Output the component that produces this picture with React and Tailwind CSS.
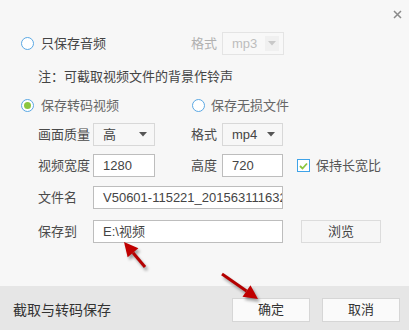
import React from 'react';

const FONT = '"Liberation Sans", "Noto Sans CJK SC", sans-serif';

function Radio({ checked }) {
  return (
    <span className="w-[13px] h-[13px] rounded-full border border-[#5aa8e4] bg-white flex items-center justify-center shrink-0">
      {checked && <span className="w-[7px] h-[7px] rounded-full bg-[#8cc63f]" />}
    </span>
  );
}

function Arrow({ disabled }) {
  return (
    <svg width="8" height="5" viewBox="0 0 8 5">
      <path d="M0 0 H8 L4 4.5 Z" fill={disabled ? '#c8c8c8' : '#555'} />
    </svg>
  );
}

function Select({ value, width, disabled }) {
  return (
    <div
      className={
        'h-[23px] flex items-center justify-between pl-[9px] pr-[7px] border ' +
        (disabled ? 'border-[#e4e4e4] text-[#bdbdbd] bg-[#f8f8f8]' : 'border-[#d8d8d8] text-[#444] bg-[#f7f7f7]')
      }
      style={{ width }}
    >
      <span>{value}</span>
      {disabled ? (
        <span className="w-[14px] h-[15px] bg-[#f0f0f0] flex items-center justify-center -mr-[3px]">
          <Arrow disabled />
        </span>
      ) : (
        <Arrow />
      )}
    </div>
  );
}

function Input({ value, width }) {
  return (
    <div
      className="h-[23px] flex items-center pl-[9px] border border-[#bdbdbd] bg-white text-[#444] overflow-hidden whitespace-nowrap"
      style={{ width }}
    >
      {value}
    </div>
  );
}

function RedArrow({ x1, y1, x2, y2 }) {
  const ang = Math.atan2(y2 - y1, x2 - x1);
  const len = 14;
  const w = 7;
  const bx = x2 - Math.cos(ang) * len;
  const by = y2 - Math.sin(ang) * len;
  const px = -Math.sin(ang) * w;
  const py = Math.cos(ang) * w;
  const head = `M${x2} ${y2} L${bx + px} ${by + py} L${bx - px} ${by - py} Z`;
  return (
    <g>
      <g transform="translate(2 3)" opacity="0.35" filter="url(#blur)">
        <line x1={x1} y1={y1} x2={bx} y2={by} stroke="#000" strokeWidth="3" />
        <path d={head} fill="#000" />
      </g>
      <line x1={x1} y1={y1} x2={bx} y2={by} stroke="#b40000" strokeWidth="3" />
      <path d={head} fill="#c00000" />
    </g>
  );
}

export default function App() {
  return (
    <div
      className="w-[409px] h-[330px] bg-[#f7f7f7] relative flex flex-col overflow-hidden text-[13px] text-[#4a4a4a]"
      style={{ fontFamily: FONT }}
    >
      {/* close */}
      <svg className="absolute left-[393px] top-[10px]" width="9" height="9" viewBox="0 0 9 9">
        <path d="M1 1 L8 8 M8 1 L1 8" stroke="#8a8a8a" strokeWidth="1.5" />
      </svg>

      <div className="flex-1 pt-[32px] pl-[21px]">
        {/* audio only */}
        <div className="h-[23px] flex items-center">
          <div className="w-[170px] flex items-center">
            <Radio />
            <span className="ml-[7px] text-[#444]">只保存音频</span>
          </div>
          <span className="w-[31px] text-[#b0b0b0]">格式</span>
          <Select value="mp3" width={62} disabled />
        </div>

        <div className="mt-[10px] h-[23px] flex items-center pl-[17px] text-[#444]">
          注：可截取视频文件的背景作铃声
        </div>

        {/* mode */}
        <div className="mt-[6px] h-[23px] flex items-center">
          <div className="w-[171px] flex items-center">
            <Radio checked />
            <span className="ml-[7px] text-[#666]">保存转码视频</span>
          </div>
          <Radio />
          <span className="ml-[6px] text-[#666]">保存无损文件</span>
        </div>

        <div className="mt-[6px] h-[23px] flex items-center pl-[17px]">
          <span className="w-[55px]">画面质量</span>
          <Select value="高" width={62} />
          <span className="w-[36px]" />
          <span className="w-[31px]">格式</span>
          <Select value="mp4" width={61} />
        </div>

        <div className="mt-[8px] h-[23px] flex items-center pl-[17px]">
          <span className="w-[55px]">视频宽度</span>
          <Input value="1280" width={62} />
          <span className="w-[36px]" />
          <span className="w-[31px]">高度</span>
          <Input value="720" width={61} />
          <span className="ml-[14px] w-[13px] h-[13px] border border-[#3fa3e8] bg-white flex items-center justify-center">
            <svg width="9" height="8" viewBox="0 0 9 8">
              <path d="M1 4 L3.5 6.5 L8 1.5" stroke="#8cc63f" strokeWidth="1.8" fill="none" />
            </svg>
          </span>
          <span className="ml-[6px] text-[#555]">保持长宽比</span>
        </div>

        <div className="mt-[9px] h-[23px] flex items-center pl-[17px]">
          <span className="w-[55px]">文件名</span>
          <Input value="V50601-115221_201563111632" width={190} />
        </div>

        <div className="mt-[11px] h-[23px] flex items-center pl-[17px]">
          <span className="w-[55px]">保存到</span>
          <Input value="E:\视频" width={190} />
          <button className="ml-[18px] w-[80px] h-[23px] border border-[#dcdcdc] bg-[#f6f6f6] text-[#444]">
            浏览
          </button>
        </div>
      </div>

      {/* footer */}
      <div className="h-[44px] bg-[#e6e6e6] flex items-center pl-[13px] pr-[9px] pt-[4px]">
        <span className="flex-1 text-[14px] text-[#333]">截取与转码保存</span>
        <button className="w-[78px] h-[24px] border border-[#d6d6d6] bg-[#fafafa] text-[#333]">确定</button>
        <button className="ml-[12px] w-[78px] h-[24px] border border-[#d6d6d6] bg-[#fafafa] text-[#333]">取消</button>
      </div>

      {/* annotation arrows */}
      <svg className="absolute left-0 top-0 pointer-events-none" width="409" height="330">
        <defs>
          <filter id="blur" x="-50%" y="-50%" width="200%" height="200%">
            <feGaussianBlur stdDeviation="1.5" />
          </filter>
        </defs>
        <RedArrow x1={145} y1={267} x2={124} y2={242} />
        <RedArrow x1={222} y1={274} x2={258} y2={299} />
      </svg>
    </div>
  );
}
